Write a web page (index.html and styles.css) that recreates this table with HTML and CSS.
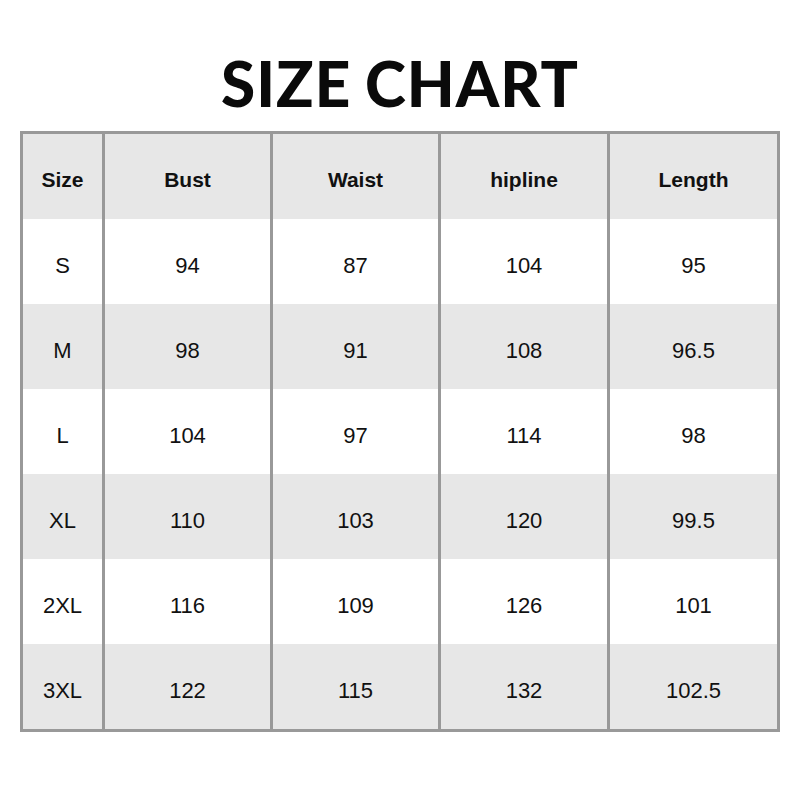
FILE: index.html
```html
<!DOCTYPE html>
<html>
<head>
<meta charset="utf-8">
<link rel="stylesheet" href="styles.css">
</head>
<body>
<div class="page">
  <h1 class="title">SIZE CHART</h1>
  <div class="chart">
    <div class="cell head">Size</div><div class="cell head">Bust</div><div class="cell head">Waist</div><div class="cell head">hipline</div><div class="cell head">Length</div>
    <div class="cell">S</div><div class="cell">94</div><div class="cell">87</div><div class="cell">104</div><div class="cell">95</div>
    <div class="cell alt">M</div><div class="cell alt">98</div><div class="cell alt">91</div><div class="cell alt">108</div><div class="cell alt">96.5</div>
    <div class="cell">L</div><div class="cell">104</div><div class="cell">97</div><div class="cell">114</div><div class="cell">98</div>
    <div class="cell alt">XL</div><div class="cell alt">110</div><div class="cell alt">103</div><div class="cell alt">120</div><div class="cell alt">99.5</div>
    <div class="cell">2XL</div><div class="cell">116</div><div class="cell">109</div><div class="cell">126</div><div class="cell">101</div>
    <div class="cell alt">3XL</div><div class="cell alt">122</div><div class="cell alt">115</div><div class="cell alt">132</div><div class="cell alt">102.5</div>
  </div>
</div>
</body>
</html>
```

FILE: styles.css
```css
html, body {
  margin: 0;
  padding: 0;
  background: #ffffff;
}
.page {
  width: 800px;
  height: 800px;
  padding-top: 52px;
  box-sizing: border-box;
  display: flex;
  flex-direction: column;
  align-items: center;
}
.title {
  margin: 0;
  height: 79px;
  font-family: "Lato", sans-serif;
  font-weight: 900;
  font-size: 62px;
  line-height: 62px;
  letter-spacing: 1px;
  word-spacing: -2px;
  color: #0a0a0a;
}
.chart {
  width: 760px;
  box-sizing: border-box;
  padding: 3px;
  background: #999999;
  display: grid;
  grid-template-columns: 79px 165px 165px 166px 167px;
  grid-auto-rows: 85px;
  column-gap: 3px;
  row-gap: 0;
}
.cell {
  background: #ffffff;
  display: flex;
  align-items: center;
  justify-content: center;
  padding-top: 8px;
  box-sizing: border-box;
  font-family: "Liberation Sans", Arial, sans-serif;
  font-size: 22px;
  color: #111111;
}
.head {
  background: #e7e7e7;
  font-weight: bold;
  font-size: 21px;
  padding-top: 6px;
}
.alt {
  background: #e7e7e7;
}
```
